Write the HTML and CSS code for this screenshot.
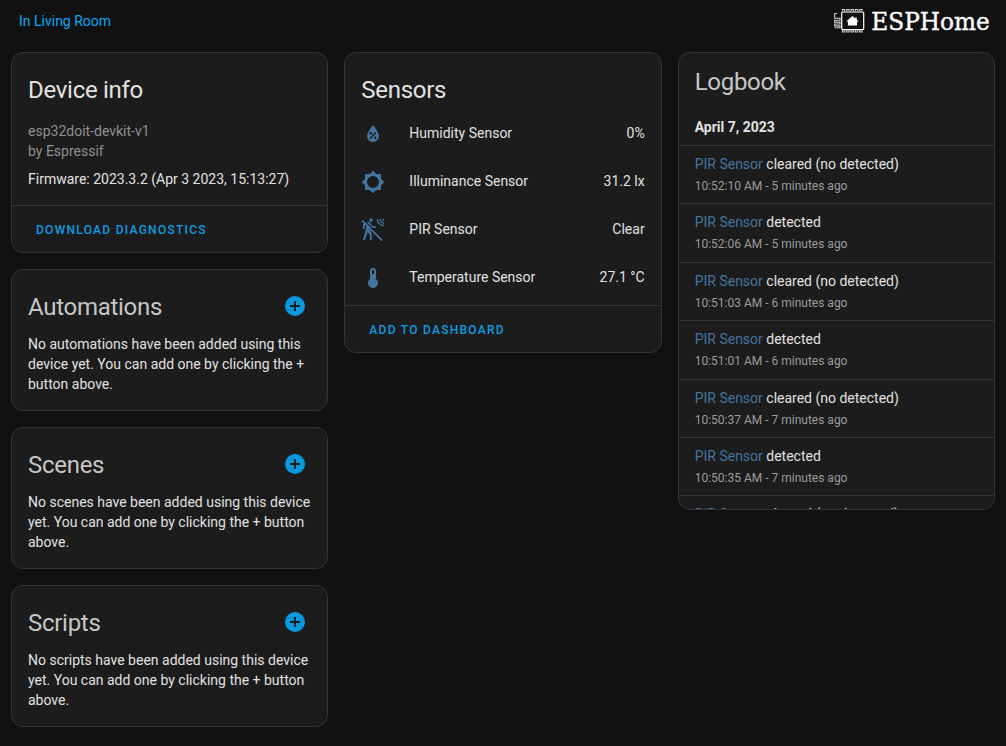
FILE: index.html
```html
<!DOCTYPE html>
<html lang="en">
<head>
<meta charset="utf-8">
<title>ESPHome device</title>
<link rel="stylesheet" href="styles.css">
</head>
<body>
<header class="topbar">
  <a class="area">In Living Room</a>
  <svg class="logo" width="160" height="30" viewBox="0 0 160 30">
    <g fill="none" stroke="#fff">
      <rect x="9.700" y="6" width="22" height="17.600" rx="1" stroke-width="1.200"/>
      <path stroke="#ccc" stroke-width="1.100" d="M10.500 5.500V3.500h2.300v2M14.800 5.500V3.500h2.300v2M19.100 5.500V3.500h2.300v2M23.400 5.500V3.500h2.300v2M27.700 5.500V3.500h2.300v2M10.500 24v2h2.300v-2M14.800 24v2h2.300v-2M19.100 24v2h2.300v-2M23.400 24v2h2.300v-2M27.700 24v2h2.300v-2"/>
      <path stroke="#ccc" stroke-width="1.100" d="M5 7.500H2.600V12.300h5.400v1.900H2.600v1.900H8V18H2.600v1.900H8v1.900H2.600"/>
    </g>
    <path fill="#fff" d="M20.400 10l-6.200 5.600h1.700v3.900h9.200v-3.900h1.700l-2-1.800v-2.400h-1.600v1z"/>
    <text class="wordmark" x="39.300" y="23.600" textLength="118.500" lengthAdjust="spacingAndGlyphs">ESPHome</text>
  </svg>
</header>
<main class="columns">
  <div class="column">
    <section class="card">
      <div class="head bright"><h1>Device info</h1></div>
      <div class="info">
        <div class="muted">esp32doit-devkit-v1</div>
        <div class="muted">by Espressif</div>
        <div class="firmware">Firmware: 2023.3.2 (Apr 3 2023, 15:13:27)</div>
      </div>
      <div class="actions">Download diagnostics</div>
    </section>
    <section class="card">
      <div class="head"><h1>Automations</h1><svg class="add" viewBox="0 0 24 24"><path d="M17,13H13V17H11V13H7V11H11V7H13V11H17M12,2A10,10 0 0,0 2,12A10,10 0 0,0 12,22A10,10 0 0,0 22,12A10,10 0 0,0 12,2Z"/></svg></div>
      <p class="empty">No automations have been added using this device yet. You can add one by clicking the + button above.</p>
    </section>
    <section class="card">
      <div class="head"><h1>Scenes</h1><svg class="add" viewBox="0 0 24 24"><path d="M17,13H13V17H11V13H7V11H11V7H13V11H17M12,2A10,10 0 0,0 2,12A10,10 0 0,0 12,22A10,10 0 0,0 22,12A10,10 0 0,0 12,2Z"/></svg></div>
      <p class="empty">No scenes have been added using this device yet. You can add one by clicking the + button above.</p>
    </section>
    <section class="card">
      <div class="head"><h1>Scripts</h1><svg class="add" viewBox="0 0 24 24"><path d="M17,13H13V17H11V13H7V11H11V7H13V11H17M12,2A10,10 0 0,0 2,12A10,10 0 0,0 12,22A10,10 0 0,0 22,12A10,10 0 0,0 12,2Z"/></svg></div>
      <p class="empty">No scripts have been added using this device yet. You can add one by clicking the + button above.</p>
    </section>
  </div>
  <div class="column">
    <section class="card">
      <div class="head bright"><h1>Sensors</h1></div>
      <div class="sensors">
        <div class="sensor"><svg class="icon" viewBox="0 0 24 24"><path d="M12,3.25C12,3.25 6,10 6,14C6,17.32 8.69,20 12,20A6,6 0 0,0 18,14C18,10 12,3.25 12,3.25M14.47,9.97L15.53,11.03L9.53,17.03L8.47,15.97M9.75,10A1.25,1.25 0 0,1 11,11.25A1.25,1.25 0 0,1 9.75,12.5A1.25,1.25 0 0,1 8.5,11.25A1.25,1.25 0 0,1 9.75,10M14.25,14.5A1.25,1.25 0 0,1 15.5,15.75A1.25,1.25 0 0,1 14.25,17A1.25,1.25 0 0,1 13,15.75A1.25,1.25 0 0,1 14.25,14.5Z"/></svg><span>Humidity Sensor</span><span class="value">0%</span></div>
        <div class="sensor"><svg class="icon" viewBox="0 0 24 24"><path d="M12,18A6,6 0 0,1 6,12A6,6 0 0,1 12,6A6,6 0 0,1 18,12A6,6 0 0,1 12,18M20,15.31L23.31,12L20,8.69V4H15.31L12,0.69L8.69,4H4V8.69L0.69,12L4,15.31V20H8.69L12,23.31L15.31,20H20V15.31Z"/></svg><span>Illuminance Sensor</span><span class="value">31.2 lx</span></div>
        <div class="sensor"><svg class="icon" viewBox="0 0 24 24"><path d="M10,0.2C9,0.2 8.2,1 8.2,2C8.2,3 9,3.8 10,3.8C11,3.8 11.8,3 11.8,2C11.8,1 11,0.2 10,0.2M15.67,1A7.33,7.33 0 0,0 23,8.33V7A6,6 0 0,1 17,1H15.67M18.33,1C18.33,3.58 20.42,5.67 23,5.67V4.33C21.16,4.33 19.67,2.84 19.67,1H18.33M21,1A2,2 0 0,0 23,3V1H21M7.92,4.03C7.75,4.03 7.58,4.06 7.42,4.11L2,5.8V11H3.8V7.33L5.91,6.67L2,22H3.8L6.67,13.89L9,17V22H10.8V15.59L8.31,11.05L9.04,8.18L10.12,10H15V8.2H11.38L9.38,4.87C9.08,4.37 8.54,4.03 7.92,4.03Z"/><path class="gap" d="M2.200 1.400L22.400 21.600"/><path class="slash" d="M1.200 2.600L21.200 22.600"/></svg><span>PIR Sensor</span><span class="value">Clear</span></div>
        <div class="sensor"><svg class="icon" viewBox="0 0 24 24"><path d="M15 13V5A3 3 0 0 0 9 5V13A5 5 0 1 0 15 13M12 4A1 1 0 0 1 13 5V8H11V5A1 1 0 0 1 12 4Z"/></svg><span>Temperature Sensor</span><span class="value">27.1 °C</span></div>
      </div>
      <div class="actions">Add to dashboard</div>
    </section>
  </div>
  <div class="column">
    <section class="card logbook">
      <h1>Logbook</h1>
      <h2>April 7, 2023</h2>
      <div class="entry"><div><a>PIR Sensor</a> cleared (no detected)</div><div class="time">10:52:10 AM - 5 minutes ago</div></div>
      <div class="entry"><div><a>PIR Sensor</a> detected</div><div class="time">10:52:06 AM - 5 minutes ago</div></div>
      <div class="entry"><div><a>PIR Sensor</a> cleared (no detected)</div><div class="time">10:51:03 AM - 6 minutes ago</div></div>
      <div class="entry"><div><a>PIR Sensor</a> detected</div><div class="time">10:51:01 AM - 6 minutes ago</div></div>
      <div class="entry"><div><a>PIR Sensor</a> cleared (no detected)</div><div class="time">10:50:37 AM - 7 minutes ago</div></div>
      <div class="entry"><div><a>PIR Sensor</a> detected</div><div class="time">10:50:35 AM - 7 minutes ago</div></div>
      <div class="entry"><div><a>PIR Sensor</a> cleared (no detected)</div></div>
    </section>
  </div>
</main>
</body>
</html>
```

FILE: styles.css
```css
* { box-sizing: border-box; }
html { background: #111; }
body {
  margin: 0;
  height: 746px;
  overflow: hidden;
  background: #111;
  color: #e1e1e1;
  font: 14px/20px Roboto, sans-serif;
}
h1, h2, p { margin: 0; }
.topbar {
  height: 52px;
  padding: 6px 14px 0 19px;
  display: flex;
  justify-content: space-between;
  align-items: flex-start;
}
.area { color: #03a9f4; padding-top: 5px; }
.logo { display: block; }
.wordmark {
  font-family: "Roboto Slab", "DejaVu Serif", serif;
  font-size: 24px;
  fill: #fff;
  stroke: #fff;
  stroke-width: 0.4px;
}
.columns {
  display: grid;
  grid-template-columns: repeat(3, 1fr);
  gap: 16px;
  padding: 0 11px;
  align-items: start;
}
.column { display: flex; flex-direction: column; gap: 16px; min-width: 0; }
.card {
  background: #1c1c1c;
  border: 1px solid #333;
  border-radius: 12px;
  overflow: hidden;
}
h1 {
  font-size: 24px;
  font-weight: 400;
  line-height: 48px;
  letter-spacing: -0.012em;
}
.head {
  display: flex;
  justify-content: space-between;
  align-items: center;
  height: 60px;
  padding: 12px 20px 0 16px;
  color: #c6c6c6;
}
.head h1 { padding-top: 2px; }
.bright { color: #e1e1e1; }
.add { width: 24px; height: 24px; fill: #0898dc; }
.info { padding: 8px 16px 16px; }
.muted { color: #8f8f8f; }
.firmware { margin-top: 8px; }
.empty { padding: 4px 16px 16px; }
.actions {
  height: 47px;
  border-top: 1px solid #333;
  padding: 1px 0 0 24px;
  line-height: 46px;
  font-size: 12px;
  font-weight: 500;
  letter-spacing: 1.27px;
  text-transform: uppercase;
  color: #0d9ce0;
}
.sensors { display: flex; flex-direction: column; gap: 8px; padding-bottom: 8px; }
.sensor {
  height: 40px;
  display: flex;
  align-items: center;
  padding: 0 16px;
}
.icon {
  width: 24px;
  height: 24px;
  margin: 2px 24px 0 0;
  fill: #44739e;
}
.value { margin-left: auto; }
.gap { fill: none; stroke: #1c1c1c; stroke-width: 1.2; }
.slash { fill: none; stroke: #44739e; stroke-width: 1.8; }
.logbook { height: 458px; }
.logbook h1 { padding: 5px 16px 0; color: #c6c6c6; }
.logbook h2 {
  padding: 11px 16px 8px;
  font-size: 14px;
  font-weight: 700;
  line-height: 20px;
}
.entry {
  height: 58.4px;
  border-top: 1px solid #333;
  padding: 8px 16px;
}
.entry a { color: #44739e; }
.time { margin-top: 3px; font-size: 12px; line-height: 18px; color: #9b9b9b; }
```
